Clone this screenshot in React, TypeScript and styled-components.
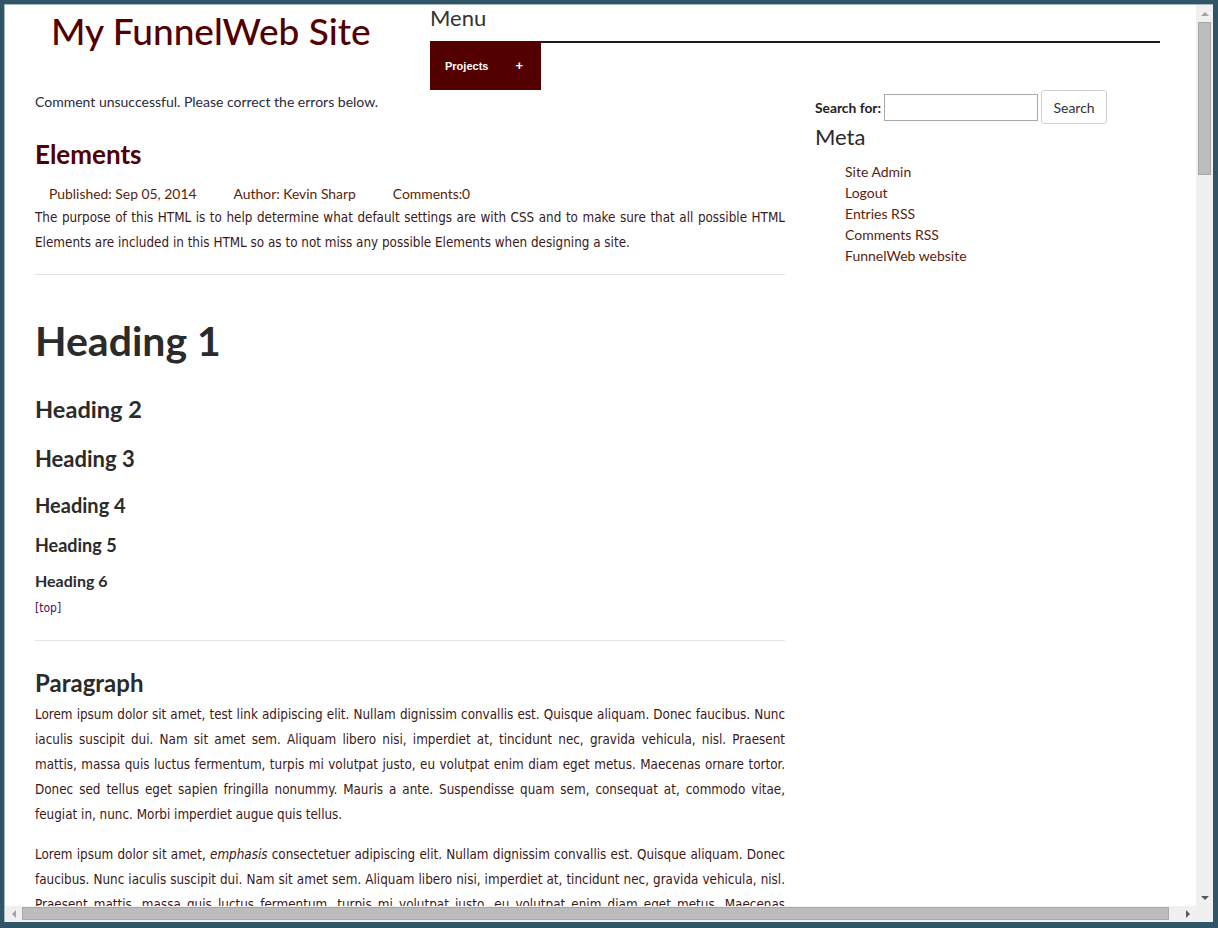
import React from "react";
import styled, { createGlobalStyle } from "styled-components";

const GlobalStyle = createGlobalStyle`
  html, body { margin: 0; padding: 0; }
  body { background: #2f5566; width: 1218px; height: 928px; overflow: hidden; }
  *, *::before, *::after { box-sizing: border-box; }
`;

const LATO = `"Lato", "Open Sans", sans-serif`;
const BODY = `"DejaVu Sans Condensed", "DejaVu Sans", sans-serif`;
const MAROON = "#520000";
const LINK = "#5a1e0c";
const TEXT = "#3a1818";

const Frame = styled.div`
  width: 1218px;
  height: 928px;
  background: #2f5566;
  padding: 4px 5px 6px 4px;
`;

const Window = styled.div`
  width: 100%;
  height: 100%;
  display: grid;
  grid-template-columns: 1fr 17px;
  grid-template-rows: 1fr 16px;
  border-top: 1px solid #a9b6bc;
  border-left: 1px solid #a9b6bc;
  background: #f0f0f0;
`;

const Viewport = styled.div`
  background: #fff;
  overflow: hidden;
  min-width: 0;
  min-height: 0;
`;

const Page = styled.div`
  padding-left: 30px;
`;

const Header = styled.header`
  display: flex;
  align-items: flex-start;
`;

const TitleBlock = styled.div`
  width: 395px;
  padding: 2px 0 0 16px;
`;

const SiteTitle = styled.h1`
  margin: 0;
  font-family: ${LATO};
  font-weight: 500;
  font-size: 37px;
  line-height: 48px;
  color: ${MAROON};
`;

const MenuBlock = styled.nav`
  width: 730px;
`;

const MenuTitle = styled.h2`
  margin: 0;
  padding-bottom: 10px;
  border-bottom: 2px solid #1c1c1c;
  font-family: ${LATO};
  font-weight: 400;
  font-size: 22px;
  line-height: 26px;
  color: #333;
`;

const NavList = styled.div`
  display: flex;
`;

const NavButton = styled.a`
  display: flex;
  align-items: center;
  width: 111px;
  height: 49px;
  margin-top: -2px;
  padding-left: 15px;
  background: ${MAROON};
  color: #fff;
  font-family: "Liberation Sans", Arial, sans-serif;
  font-weight: 700;
  font-size: 11px;
  text-decoration: none;
`;

const Plus = styled.span`
  margin-left: auto;
  margin-right: 18px;
  font-size: 13px;
`;

const Body = styled.div`
  display: grid;
  grid-template-columns: 750px 1fr;
  column-gap: 30px;
`;

const Main = styled.main``;

const Notice = styled.p`
  margin: 2px 0 0;
  font-family: ${LATO};
  font-size: 14px;
  line-height: 20px;
  color: #2a2a3a;
`;

const PostTitle = styled.h2`
  margin: 26px 0 0;
  font-family: ${LATO};
  font-weight: 700;
  font-size: 26px;
  line-height: 32px;
  color: ${MAROON};
`;

const MetaRow = styled.ul`
  display: flex;
  gap: 37px;
  list-style: none;
  margin: 14px 0 0;
  padding-left: 14px;
  font-family: ${LATO};
  font-size: 13.9px;
  line-height: 20px;
  color: ${LINK};
`;

const Para = styled.p<{ $top?: number }>`
  margin: ${(p) => p.$top ?? 0}px 0 0;
  font-family: ${BODY};
  font-size: 13.35px;
  line-height: 25px;
  color: ${TEXT};
  text-align: justify;
`;

const Rule = styled.hr<{ $top: number }>`
  border: 0;
  border-top: 1px solid #e2e2e2;
  margin: ${(p) => p.$top}px 0 0;
  height: 0;
`;

const Heading = styled.div<{ $size: number; $lh: number; $top: number }>`
  margin-top: ${(p) => p.$top}px;
  font-family: ${LATO};
  font-weight: 700;
  font-size: ${(p) => p.$size}px;
  line-height: ${(p) => p.$lh}px;
  color: #2b2b2b;
`;

const TopLink = styled.a`
  display: block;
  margin-top: 9px;
  font-family: ${BODY};
  font-size: 12px;
  line-height: 16px;
  color: #4a1060;
  text-decoration: none;
`;

const InlineLink = styled.a`
  color: inherit;
  text-decoration: none;
`;

const Sidebar = styled.aside``;

const SearchForm = styled.form`
  display: flex;
  align-items: center;
  height: 34px;
`;

const SearchLabel = styled.label`
  margin-right: 3px;
  font-family: ${LATO};
  font-weight: 700;
  font-size: 13.8px;
  color: #222;
`;

const SearchInput = styled.input`
  width: 154px;
  height: 27px;
  margin: 0 3px 0 0;
  border: 1px solid #a9a9a9;
  padding: 2px 4px;
`;

const SearchButton = styled.button`
  width: 66px;
  height: 34px;
  background: #fff;
  border: 1px solid #cfcfcf;
  border-radius: 3px;
  font-family: ${LATO};
  font-size: 14px;
  color: #333;
`;

const MetaTitle = styled.h2`
  margin: 0;
  font-family: ${LATO};
  font-weight: 400;
  font-size: 22px;
  line-height: 26px;
  color: #2b2b2b;
`;

const MetaList = styled.ul`
  list-style: none;
  margin: 11px 0 0;
  padding-left: 30px;
  font-family: ${LATO};
  font-size: 14px;
  line-height: 21px;
  color: ${LINK};
`;

/* scrollbars */
const VScroll = styled.div`
  display: flex;
  flex-direction: column;
  background: #f0f0f0;
`;

const HScroll = styled.div`
  display: flex;
  align-items: stretch;
  background: #f0f0f0;
`;

const Corner = styled.div`
  background: #f0f0f0;
`;

const ArrowBox = styled.div<{ $w: number; $h: number }>`
  flex: none;
  width: ${(p) => p.$w}px;
  height: ${(p) => p.$h}px;
  display: flex;
  align-items: center;
  justify-content: center;
`;

const Spacer = styled.div`
  flex: 1;
`;

const Triangle = styled.div<{ $dir: "up" | "down" | "left" | "right"; $color: string }>`
  width: 0;
  height: 0;
  ${(p) =>
    p.$dir === "up"
      ? `border-left: 4px solid transparent; border-right: 4px solid transparent; border-bottom: 4px solid ${p.$color};`
      : p.$dir === "down"
      ? `border-left: 4px solid transparent; border-right: 4px solid transparent; border-top: 4px solid ${p.$color};`
      : p.$dir === "left"
      ? `border-top: 4px solid transparent; border-bottom: 4px solid transparent; border-right: 4px solid ${p.$color};`
      : `border-top: 4px solid transparent; border-bottom: 4px solid transparent; border-left: 4px solid ${p.$color};`}
`;

const VThumb = styled.div`
  flex: none;
  height: 153px;
  margin: 0 2px;
  background: #bcbcbc;
  border: 1px solid #a8a8a8;
`;

const HThumb = styled.div`
  flex: none;
  width: 1147px;
  margin: 1px 0 2px;
  background: #bcbcbc;
  border: 1px solid #a8a8a8;
`;

export default function App() {
  return (
    <Frame>
      <GlobalStyle />
      <Window>
        <Viewport>
          <Page>
            <Header>
              <TitleBlock>
                <SiteTitle>My FunnelWeb Site</SiteTitle>
              </TitleBlock>
              <MenuBlock>
                <MenuTitle>Menu</MenuTitle>
                <NavList>
                  <NavButton href="#">
                    Projects<Plus>+</Plus>
                  </NavButton>
                </NavList>
              </MenuBlock>
            </Header>
            <Body>
              <Main>
                <Notice>Comment unsuccessful. Please correct the errors below.</Notice>
                <PostTitle>Elements</PostTitle>
                <MetaRow>
                  <li>Published: Sep 05, 2014</li>
                  <li>Author: Kevin Sharp</li>
                  <li>Comments:0</li>
                </MetaRow>
                <Para $top={1}>
                  The purpose of this HTML is to help determine what default settings are with CSS and to
                  make sure that all possible HTML Elements are included in this HTML so as to not miss any
                  possible Elements when designing a site.
                </Para>
                <Rule $top={19} />
                <Heading $size={41} $lh={50} $top={41}>Heading 1</Heading>
                <Heading $size={23.6} $lh={29} $top={29}>Heading 2</Heading>
                <Heading $size={22} $lh={26} $top={22}>Heading 3</Heading>
                <Heading $size={20} $lh={24} $top={21}>Heading 4</Heading>
                <Heading $size={18} $lh={22} $top={17}>Heading 5</Heading>
                <Heading $size={16} $lh={20} $top={15}>Heading 6</Heading>
                <TopLink href="#">[top]</TopLink>
                <Rule $top={24} />
                <Heading $size={24} $lh={29} $top={27}>Paragraph</Heading>
                <Para $top={5}>
                  Lorem ipsum dolor sit amet, <InlineLink href="#">test link</InlineLink> adipiscing elit.
                  Nullam dignissim convallis est. Quisque aliquam. Donec faucibus. Nunc iaculis suscipit
                  dui. Nam sit amet sem. Aliquam libero nisi, imperdiet at, tincidunt nec, gravida vehicula,
                  nisl. Praesent mattis, massa quis luctus fermentum, turpis mi volutpat justo, eu volutpat
                  enim diam eget metus. Maecenas ornare tortor. Donec sed tellus eget sapien fringilla
                  nonummy. Mauris a ante. Suspendisse quam sem, consequat at, commodo vitae, feugiat in,
                  nunc. Morbi imperdiet augue quis tellus.
                </Para>
                <Para $top={15}>
                  Lorem ipsum dolor sit amet, <em>emphasis</em> consectetuer adipiscing elit. Nullam
                  dignissim convallis est. Quisque aliquam. Donec faucibus. Nunc iaculis suscipit dui. Nam
                  sit amet sem. Aliquam libero nisi, imperdiet at, tincidunt nec, gravida vehicula, nisl.
                  Praesent mattis, massa quis luctus fermentum, turpis mi volutpat justo, eu volutpat enim
                  diam eget metus. Maecenas ornare tortor. Donec sed tellus eget sapien fringilla nonummy.
                  Mauris a ante. Suspendisse quam sem, consequat at, commodo vitae, feugiat in, nunc. Morbi
                  imperdiet augue quis tellus.
                </Para>
              </Main>
              <Sidebar>
                <SearchForm onSubmit={(e) => e.preventDefault()}>
                  <SearchLabel htmlFor="s">Search for:</SearchLabel>
                  <SearchInput id="s" type="text" />
                  <SearchButton type="submit">Search</SearchButton>
                </SearchForm>
                <MetaTitle>Meta</MetaTitle>
                <MetaList>
                  <li>Site Admin</li>
                  <li>Logout</li>
                  <li>Entries RSS</li>
                  <li>Comments RSS</li>
                  <li>FunnelWeb website</li>
                </MetaList>
              </Sidebar>
            </Body>
          </Page>
        </Viewport>
        <VScroll>
          <ArrowBox $w={17} $h={17}>
            <Triangle $dir="up" $color="#a3a3a3" />
          </ArrowBox>
          <VThumb />
          <Spacer />
          <ArrowBox $w={17} $h={17}>
            <Triangle $dir="down" $color="#5a5a5a" />
          </ArrowBox>
        </VScroll>
        <HScroll>
          <ArrowBox $w={17} $h={16}>
            <Triangle $dir="left" $color="#a3a3a3" />
          </ArrowBox>
          <HThumb />
          <Spacer />
          <ArrowBox $w={17} $h={16}>
            <Triangle $dir="right" $color="#5a5a5a" />
          </ArrowBox>
        </HScroll>
        <Corner />
      </Window>
    </Frame>
  );
}
